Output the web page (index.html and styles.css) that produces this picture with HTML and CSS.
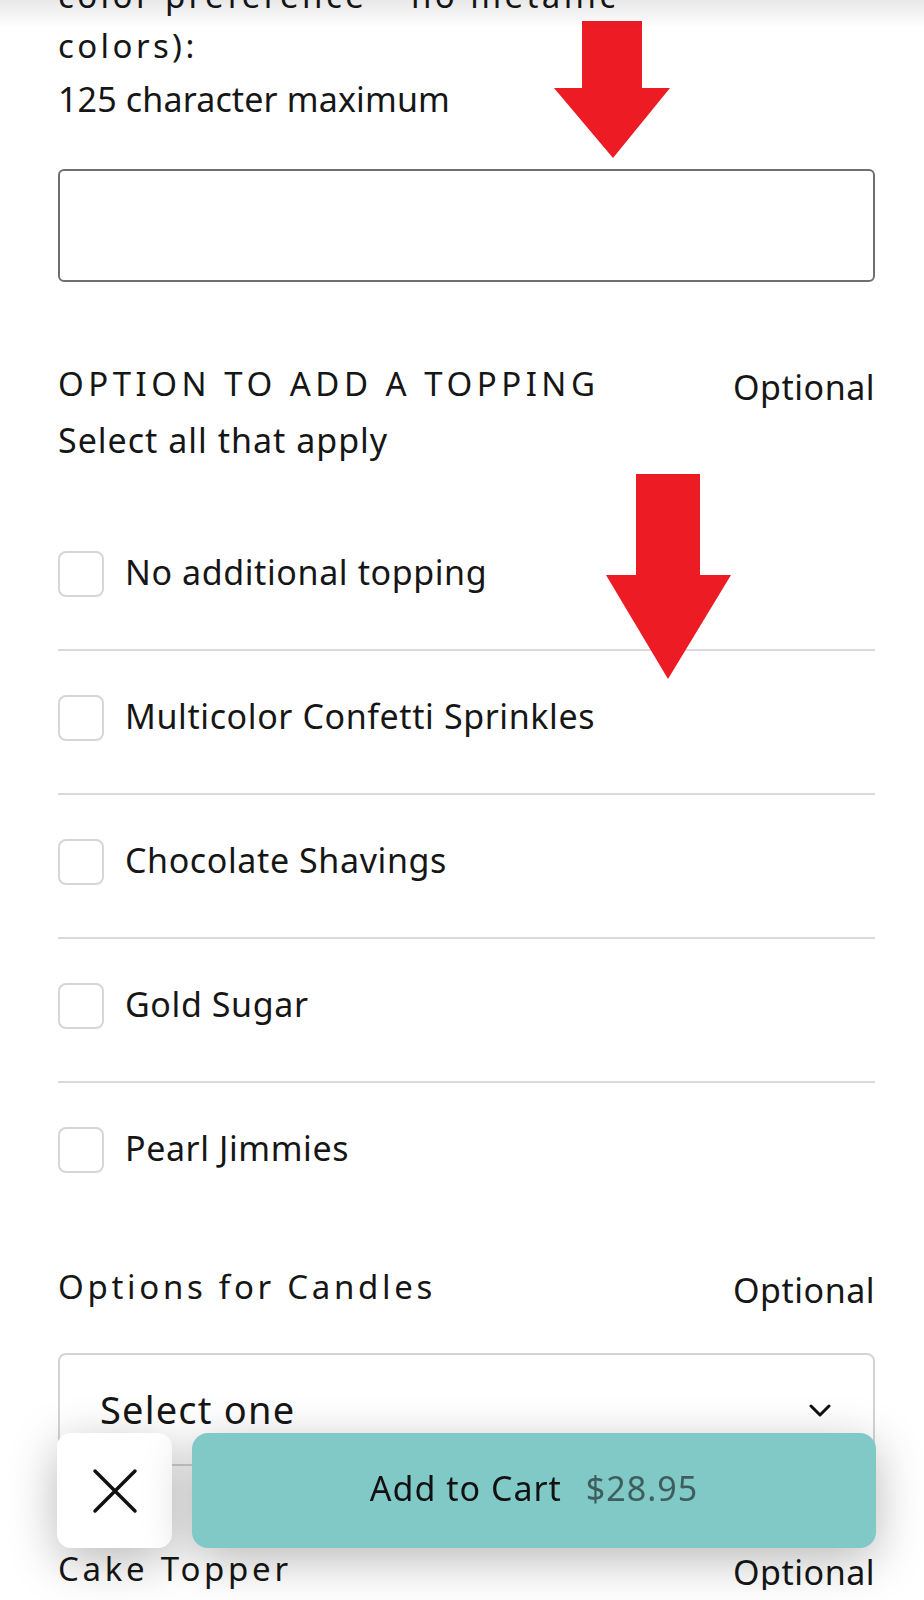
FILE: index.html
```html
<!DOCTYPE html>
<html lang="en">
<head>
    <meta charset="UTF-8">
    <title>Cake options</title>
    <link rel="stylesheet" href="styles.css">
</head>
<body>
<div class="top-shade"></div>

<main class="form">
    <!-- Message on cake -->
    <section class="field">
        <label class="field-label" for="message">color preference – no metallic<br>colors):</label>
        <p class="hint">125 character maximum</p>
        <input class="text-input" type="text" id="message" maxlength="125">
    </section>

    <!-- Topping -->
    <section class="group">
        <div class="group-head">
            <h3 class="group-title">Option to add a topping</h3>
            <span class="optional">Optional</span>
        </div>
        <p class="group-note">Select all that apply</p>
        <ul class="options">
            <li class="option"><span class="check"></span><span class="option-label">No additional topping</span></li>
            <li class="option"><span class="check"></span><span class="option-label">Multicolor Confetti Sprinkles</span></li>
            <li class="option"><span class="check"></span><span class="option-label">Chocolate Shavings</span></li>
            <li class="option"><span class="check"></span><span class="option-label">Gold Sugar</span></li>
            <li class="option"><span class="check"></span><span class="option-label">Pearl Jimmies</span></li>
        </ul>
    </section>

    <!-- Candles -->
    <section class="group group-tight">
        <div class="group-head">
            <h3 class="group-title plain">Options for Candles</h3>
            <span class="optional">Optional</span>
        </div>
        <div class="select">
            <span>Select one</span>
            <svg class="chevron" width="22" height="13" viewBox="0 0 22 13">
                <polyline points="2,2 11,11 20,2" fill="none" stroke="#111" stroke-width="3" stroke-linecap="round" stroke-linejoin="round"/>
            </svg>
        </div>
    </section>

    <!-- Topper -->
    <section class="group group-topper">
        <div class="group-head">
            <h3 class="group-title plain">Cake Topper</h3>
            <span class="optional">Optional</span>
        </div>
    </section>
</main>

<!-- red arrows drawn over the screenshot -->
<svg class="arrow arrow-one" width="116" height="137" viewBox="0 0 116 137">
    <polygon points="28,0 88,0 88,67 116,67 59,137 0,67 28,67"/>
</svg>
<svg class="arrow arrow-two" width="125" height="205" viewBox="0 0 125 205">
    <polygon points="30,0 94,0 94,101 125,101 62,205 0,101 30,101"/>
</svg>

<!-- bottom bar -->
<div class="cart-bar">
    <button class="close-btn" aria-label="Close">
        <svg width="46" height="46" viewBox="0 0 46 46">
            <path d="M3 3 L43 43 M43 3 L3 43" stroke="#111" stroke-width="3.5" stroke-linecap="round"/>
        </svg>
    </button>
    <button class="cart-btn">Add to Cart<span class="price">$28.95</span></button>
</div>
</body>
</html>
```

FILE: styles.css
```css
body {
    margin: 0;
    font-family: "Noto Sans", "Open Sans", sans-serif;
    color: #161616;
    background: #fff;
}

.top-shade {
    position: fixed;
    top: 0;
    left: 0;
    right: 0;
    height: 28px;
    background: linear-gradient(rgba(0, 0, 0, 0.09), rgba(0, 0, 0, 0));
    pointer-events: none;
    z-index: 2;
}

.form {
    margin-top: -29px;
    padding: 0 49px 0 58px;
}

.field-label {
    display: block;
    font-size: 33px;
    line-height: 50px;
    letter-spacing: 3.4px;
}

.hint {
    margin: 6px 0 0;
    font-size: 34px;
    line-height: 44px;
    letter-spacing: 0.15px;
}

.text-input {
    display: block;
    width: 100%;
    height: 113px;
    margin-top: 48px;
    box-sizing: border-box;
    border: 2px solid #6f6f6f;
    border-radius: 6px;
    background: #fff;
}

.group {
    margin-top: 84px;
}

.group-tight {
    margin-top: 44px;
}

.group-topper {
    margin-top: 85px;
}

.group-head {
    display: flex;
    justify-content: space-between;
    align-items: flex-start;
}

.group-title {
    margin: 0;
    font-size: 33px;
    font-weight: 400;
    line-height: 36px;
    letter-spacing: 4.5px;
    text-transform: uppercase;
}

.group-title.plain {
    letter-spacing: 3.7px;
    text-transform: none;
}

.optional {
    padding-top: 3px;
    font-size: 34px;
    line-height: 36px;
    letter-spacing: 0.5px;
}

.group-note {
    margin: 16.5px 0 0;
    font-size: 34px;
    line-height: 36px;
    letter-spacing: 1px;
}

.options {
    list-style: none;
    margin: 49.5px 0 0;
    padding: 0;
}

.option {
    display: flex;
    align-items: center;
    gap: 21px;
    padding: 43.5px 0 52.5px;
    border-bottom: 2px solid #dadada;
}

.option:last-child {
    border-bottom: none;
}

.check {
    flex: none;
    width: 46px;
    height: 46px;
    box-sizing: border-box;
    border: 2px solid #d6d6d6;
    border-radius: 8px;
}

.option-label {
    padding-bottom: 4px;
    font-size: 34px;
    line-height: 42px;
    letter-spacing: 0.6px;
}

.select {
    display: flex;
    align-items: center;
    justify-content: space-between;
    height: 113px;
    margin-top: 45px;
    box-sizing: border-box;
    padding: 0 42px 2px 40px;
    border: 2px solid #d4d4d4;
    border-radius: 8px;
    font-size: 38px;
    line-height: 52px;
    letter-spacing: 1.2px;
}

.chevron {
    flex: none;
    margin-top: 4px;
}

.arrow {
    position: absolute;
    fill: #ed1c24;
}

.arrow-one {
    left: 554px;
    top: 21px;
}

.arrow-two {
    left: 606px;
    top: 474px;
}

.cart-bar {
    position: fixed;
    left: 57px;
    right: 48px;
    bottom: 52px;
    height: 115px;
    display: flex;
    gap: 20px;
    z-index: 3;
}

.close-btn {
    width: 115px;
    border: none;
    border-radius: 14px;
    background: #fff;
    display: flex;
    align-items: center;
    justify-content: center;
    box-shadow: 0 12px 48px rgba(0, 0, 0, 0.28);
    cursor: pointer;
}

.cart-btn {
    flex: 1;
    border: none;
    border-radius: 16px;
    background: #80c9c6;
    font: inherit;
    font-size: 34px;
    line-height: 44px;
    letter-spacing: 1px;
    color: #111;
    padding: 0 0 5px;
    box-shadow: 0 12px 48px rgba(0, 0, 0, 0.28);
    cursor: pointer;
}

.price {
    margin-left: 24px;
    color: #3e5e5d;
}
```
